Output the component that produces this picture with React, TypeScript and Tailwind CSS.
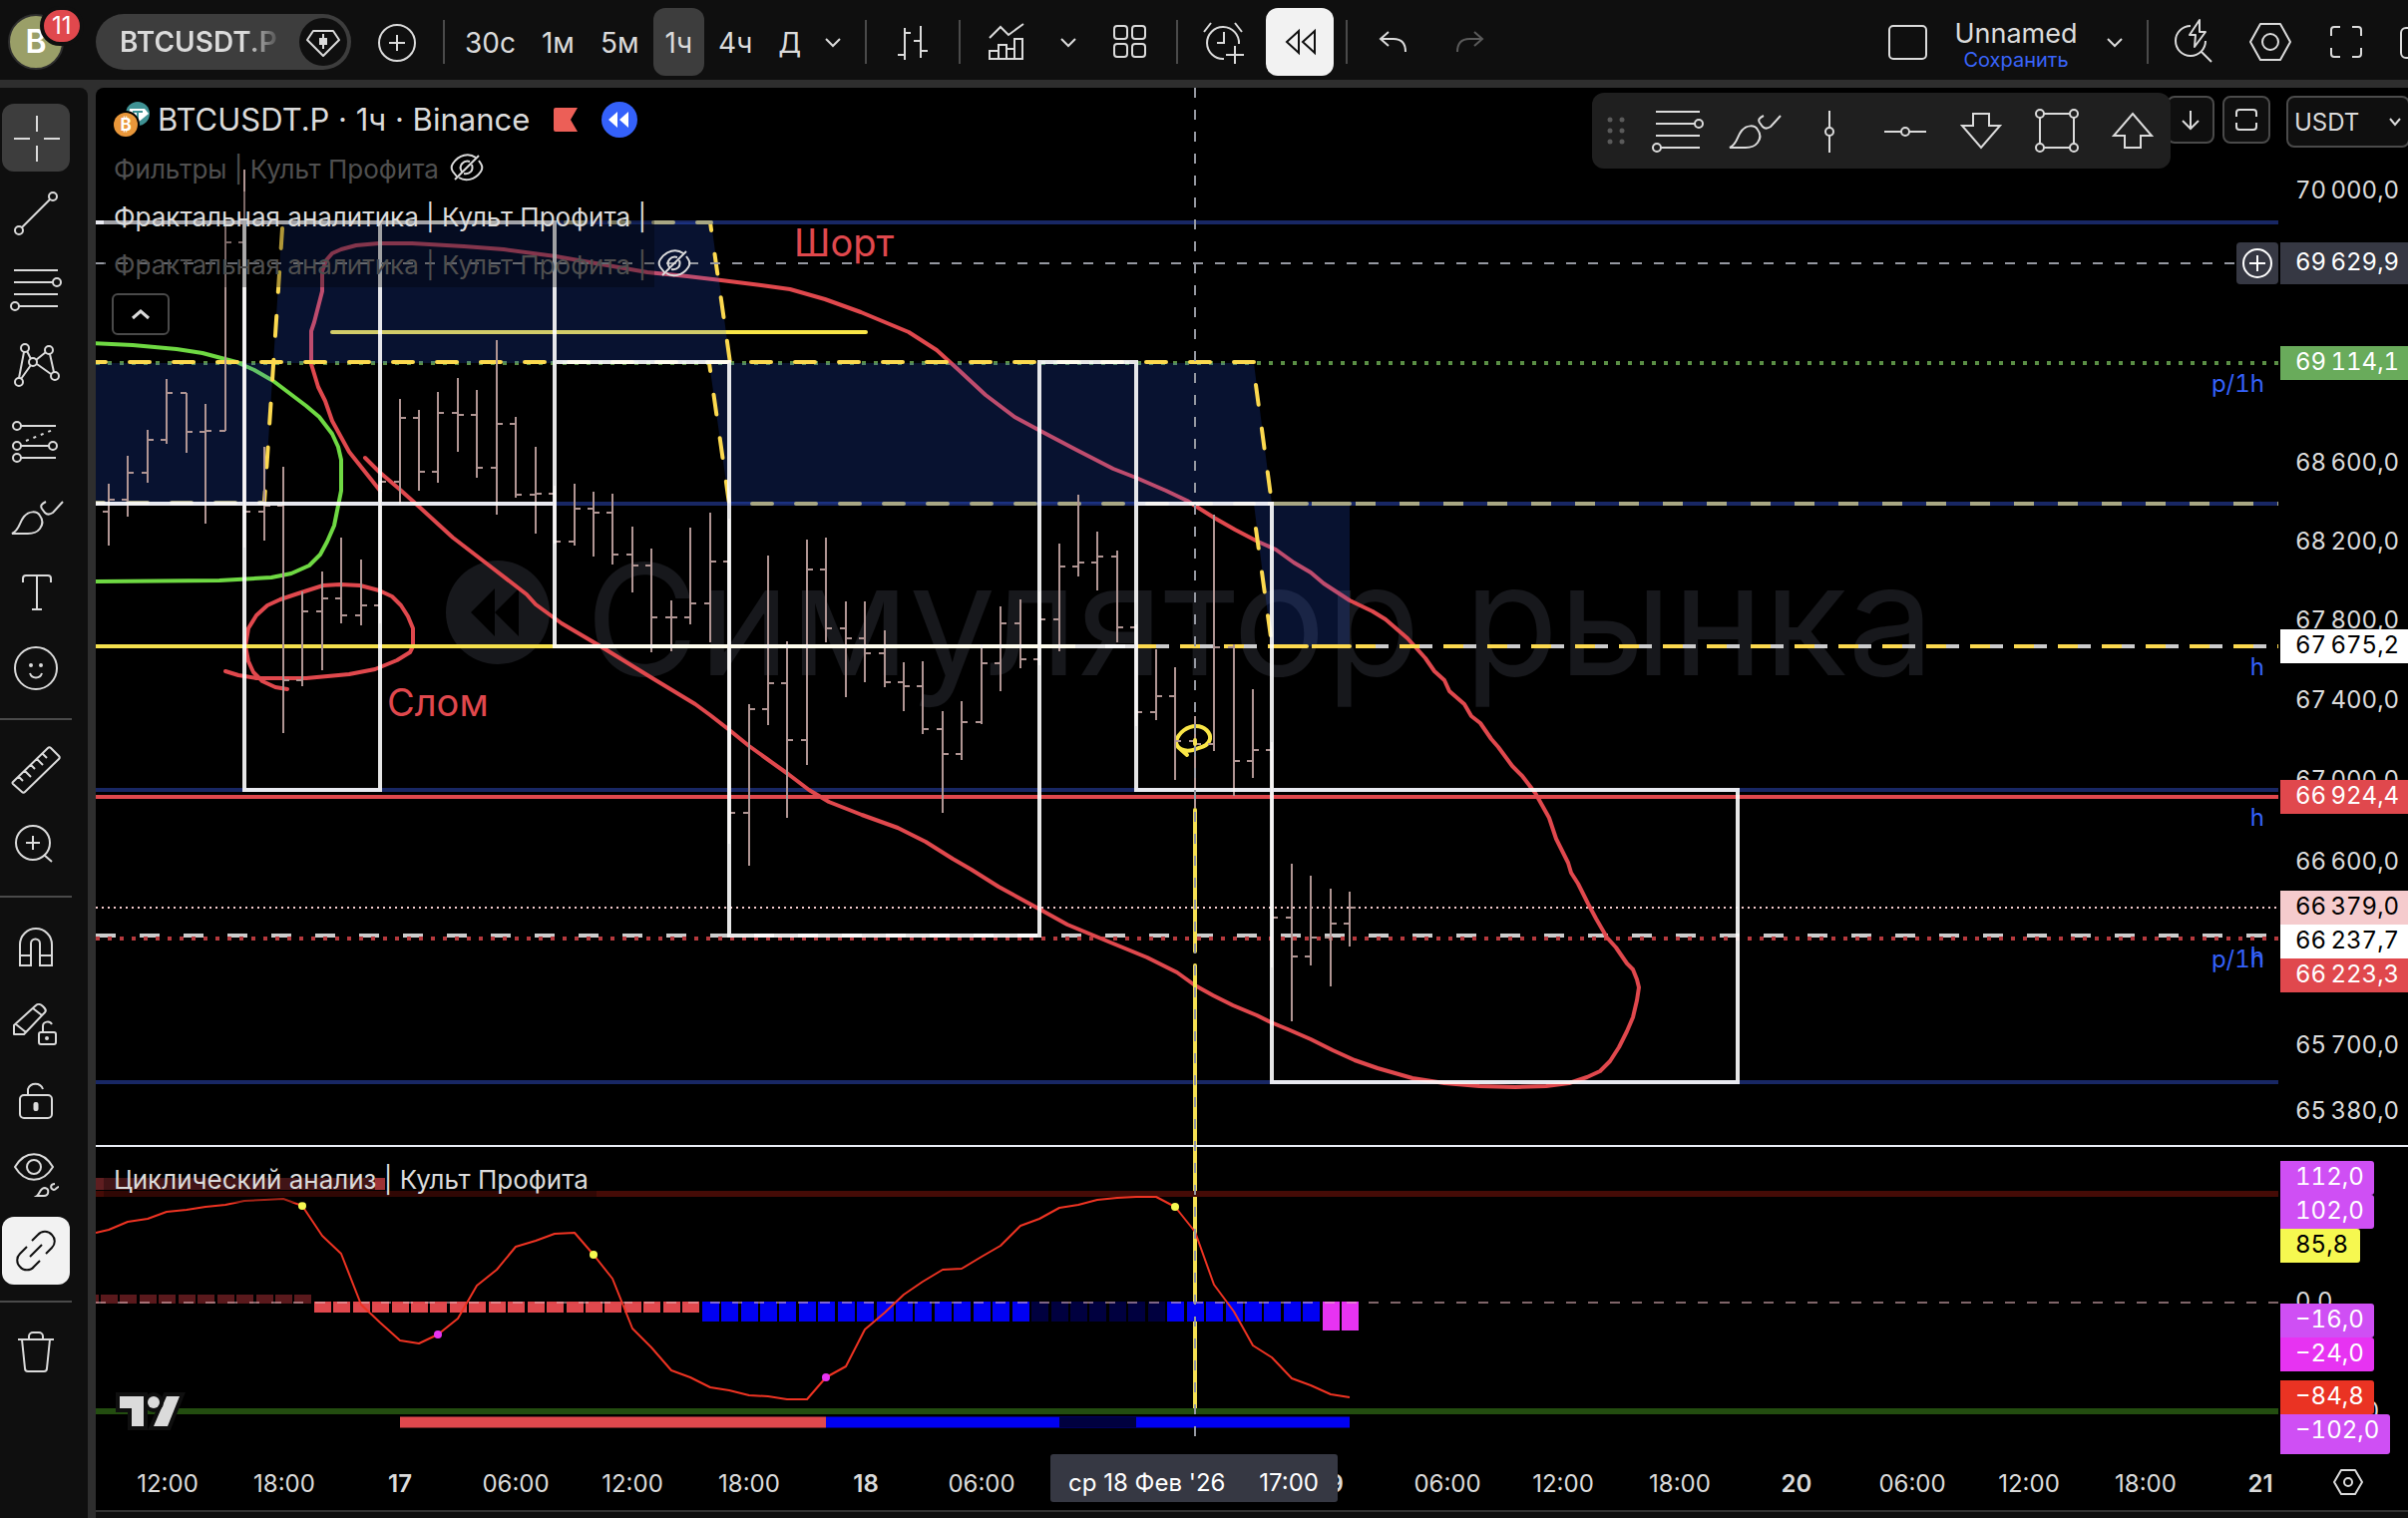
import { useState, type ReactNode } from "react";
import clsx from "clsx";

type Tone = "light" | "dark";

function Icon({ children, className }: { children: ReactNode; className?: string }) {
  return (
    <svg
      viewBox="0 0 56 56"
      className={clsx("size-14 shrink-0", className)}
      fill="none"
      stroke="currentColor"
      strokeWidth="2"
      aria-hidden="true"
    >
      {children}
    </svg>
  );
}

const fibIcon = (
  <>
    <path d="M6 9h44M6 21h39M6 33h44M11 45h39" />
    <circle cx="49" cy="21" r="4" />
    <circle cx="7" cy="45" r="4" />
  </>
);

const brushIcon = (
  <>
    <path d="M4 45C12 41 11 34 16 28c5-6 13-6 16-1 3 4 3 9 0 13-3 4-7 5-12 5z" />
    <path d="M38 13c-4 2-6 4-4 7l3 4c2 2 5 2 8 0l10-11" />
  </>
);

const lockIcon = (
  <>
    <rect x="12" y="24" width="32" height="23" rx="4" />
    <path d="M20 24v-6a8 8 0 0 1 15 0" />
    <rect x="26.500" y="32" width="3" height="7" rx="1" fill="currentColor" />
  </>
);

const chevronIcon = <path d="M21 25l7 7 7-7" />;

type Tool = { label: string; icon: ReactNode; active?: Tone };

const toolGroups: Tool[][] = [
  [
    {
      label: "Перекрестие",
      active: "dark",
      icon: <path d="M6 29h16M36 29h16M29 6v16M29 36v16" />,
    },
    {
      label: "Линия тренда",
      icon: (
        <>
          <path d="M14 42l28-28" />
          <circle cx="11" cy="45" r="4" />
          <circle cx="45" cy="11" r="4" />
        </>
      ),
    },
    { label: "Фибоначчи", icon: fibIcon },
    {
      label: "Паттерны",
      icon: (
        <>
          <path d="M16 15l-5 26M19 14l4 8M28 23l10-8M42 17l4 18M29 27l14 10M23 28L13 42" />
          <circle cx="17" cy="11" r="4" />
          <circle cx="41" cy="13" r="4" />
          <circle cx="25" cy="25" r="4" />
          <circle cx="11" cy="45" r="4" />
          <circle cx="47" cy="39" r="4" />
        </>
      ),
    },
    {
      label: "Прогнозирование",
      icon: (
        <>
          <path d="M13 13h35M13 33h28M13 45h35" />
          <path d="M18 28l27-11" strokeDasharray="3 5" />
          <circle cx="9" cy="13" r="4" />
          <circle cx="9" cy="33" r="4" />
          <circle cx="45" cy="33" r="4" />
          <circle cx="9" cy="45" r="4" />
        </>
      ),
    },
    { label: "Кисть", icon: brushIcon },
    { label: "Текст", icon: <path d="M15 18v-4a3 3 0 0 1 3-3h22a3 3 0 0 1 3 3v4M29 11v34M24 45h10" /> },
    {
      label: "Смайлы",
      icon: (
        <>
          <circle cx="28" cy="28" r="21" />
          <path d="M22 33c2 6 10 6 12 0" />
          <circle cx="23" cy="25" r="1" fill="currentColor" />
          <circle cx="33" cy="25" r="1" fill="currentColor" />
        </>
      ),
    },
  ],
  [
    {
      label: "Линейка",
      icon: (
        <path
          strokeLinejoin="round"
          d="M5 40L40 6c1-1 2-1 3 0l8 8c1 1 1 2 0 3L17 50c-1 1-2 1-3 0l-9-8c-1-1-1-1 0-2zM11 35l4 4M17 29l6 6M23 23l4 4M29 17l6 6M35 12l4 4"
        />
      ),
    },
    {
      label: "Увеличить",
      icon: (
        <>
          <circle cx="25" cy="25" r="17" />
          <path d="M18 25h14M25 18v14M36 37l8 7" />
        </>
      ),
    },
  ],
  [
    {
      label: "Магнит",
      icon: <path d="M12 46V25a16 16 0 0 1 32 0v21H32V24a4 4 0 0 0-9 0v22zM12 36h11M32 36h12" />,
    },
    {
      label: "Режим рисования",
      icon: (
        <>
          <path d="M6 39v-9L28 10c2-2 5-1 7 1s4 4 2 6L16 39zM8 29l10 8M25 13l9 7" strokeLinejoin="round" />
          <rect x="31" y="37" width="17" height="12" rx="2" />
          <path d="M35 37v-6c0-5 7-6 9-2" />
          <circle cx="39" cy="43" r="1" fill="currentColor" />
        </>
      ),
    },
    { label: "Заблокировать", icon: lockIcon },
    {
      label: "Скрыть объекты",
      icon: (
        <>
          <path d="M7 20c10-17 28-17 38 0-10 17-28 17-38 0z" />
          <circle cx="26" cy="20" r="7" />
          <path d="M29 49c3-2 3-8 8-8 5 1 4 8-1 8zM47 37c-5 0-5 5-1 6 2 0 3-3 5-3" />
        </>
      ),
    },
    {
      label: "Связать",
      active: "light",
      icon: (
        <path d="M24 18l6-6a9 9 0 0 1 14 0 9 9 0 0 1 0 13l-6 6M19 24l-7 7a9 9 0 0 0 0 13 9 9 0 0 0 14 0l6-6M22 34l12-12" />
      ),
    },
  ],
  [
    {
      label: "Удалить",
      icon: <path d="M10 15h36M21 15v-3a4 4 0 0 1 4-4h6a4 4 0 0 1 4 4v3M14 15l3 29a3 3 0 0 0 3 3h16a3 3 0 0 0 3-3l3-29" />,
    },
  ],
];

const favorites: Tool[] = [
  { label: "Фибоначчи", icon: fibIcon },
  { label: "Кисть", icon: brushIcon },
  {
    label: "Вертикальная линия",
    icon: (
      <>
        <path d="M28 8v17M28 33v17" />
        <circle cx="28" cy="29" r="4" />
      </>
    ),
  },
  {
    label: "Горизонтальная линия",
    icon: (
      <>
        <path d="M7 29h17M32 29h17" />
        <circle cx="28" cy="29" r="4" />
      </>
    ),
  },
  { label: "Стрелка вниз", icon: <path d="M20 11h16v12h11L28 45 9 23h11z" /> },
  {
    label: "Прямоугольник",
    icon: (
      <>
        <path d="M15 11h26M15 45h26M11 15v26M45 15v26" />
        <circle cx="11" cy="11" r="4" />
        <circle cx="45" cy="11" r="4" />
        <circle cx="11" cy="45" r="4" />
        <circle cx="45" cy="45" r="4" />
      </>
    ),
  },
  { label: "Стрелка вверх", icon: <path d="M28 11l19 22H36v12H20V33H9z" /> },
];

const intervals = ["30с", "1м", "5м", "1ч", "4ч", "Д"];

function BarButton({
  label,
  children,
  width = "w-[68px]",
  className,
}: {
  label: string;
  children: ReactNode;
  width?: string;
  className?: string;
}) {
  return (
    <button
      type="button"
      aria-label={label}
      className={clsx("flex h-[68px] shrink-0 items-center justify-center rounded-xl", width, className)}
    >
      <Icon>{children}</Icon>
    </button>
  );
}

function Divider() {
  return <div className="mx-3 h-11 w-[2px] shrink-0 bg-[#4a4a4a]" />;
}

function TopBar() {
  const [interval, setInterval] = useState("1ч");

  return (
    <header className="flex h-20 shrink-0 items-center overflow-hidden bg-[#0f0f0f] pt-1">
      <button type="button" className="relative ml-2 size-14 shrink-0">
        <span className="flex size-full items-center justify-center rounded-full border-2 border-[#2e2e2e] bg-[#9a9f68] text-[32px] font-semibold text-white">
          B
        </span>
        <span className="absolute -top-2 left-8 flex h-10 items-center rounded-full border-4 border-[#0f0f0f] bg-[#e0484d] px-2 text-2xl text-white">
          11
        </span>
      </button>

      <div className="ml-8 flex h-14 w-64 shrink-0 items-center justify-between rounded-full bg-[#3d3d3d] pr-1 pl-6">
        <button
          type="button"
          className="bg-linear-to-r from-[#dbdbdb] from-80% to-[#555555] bg-clip-text text-[28px] font-semibold text-transparent"
        >
          BTCUSDT.P
        </button>
        <svg viewBox="0 0 48 48" className="size-12 shrink-0" aria-hidden="true">
          <circle cx="24" cy="24" r="24" fill="#0f0f0f" />
          <path d="M14 13h20l6 9-16 16L8 22z" fill="none" stroke="#dbdbdb" strokeWidth="2" strokeLinejoin="round" />
          <path d="M24 16v15" stroke="#dbdbdb" strokeWidth="2" />
          <rect x="20" y="20" width="8" height="7" fill="#dbdbdb" />
        </svg>
      </div>
      <button type="button" aria-label="Сравнить" className="mx-5 flex w-[52px] shrink-0 justify-center">
        <Icon>
          <circle cx="28" cy="29" r="18" />
          <path d="M20 29h16M28 21v16" />
        </Icon>
      </button>
      <div className="h-11 w-[2px] shrink-0 bg-[#4a4a4a]" />

      <div className="ml-2 flex shrink-0 gap-[2px]">
        {intervals.map((item) => (
          <button
            key={item}
            type="button"
            onClick={() => setInterval(item)}
            className={clsx(
              "h-[68px] rounded-xl px-3 pt-[2px] text-[28px]",
              item === interval && "bg-[#3d3d3d]"
            )}
          >
            {item}
          </button>
        ))}
      </div>
      <BarButton label="Интервалы" width="w-12" className="-mx-1">
        {chevronIcon}
      </BarButton>
      <Divider />
      <BarButton label="Бары">
        <path d="M20 14v32M20 19h6M13 41h7M36 12v32M29 27h7M36 37h7" />
      </BarButton>
      <Divider />
      <BarButton label="Индикаторы">
        <path d="M11 24l11-11 8 8 15-11M11 45V37h9v8zM20 45V31h8v14zM28 45V35h8v10zM36 45V25h8v20z" />
      </BarButton>
      <BarButton label="Избранные индикаторы" width="w-14">
        {chevronIcon}
      </BarButton>
      <BarButton label="Шаблоны">
        <rect x="12" y="12" width="13" height="13" rx="3" />
        <rect x="30" y="12" width="13" height="13" rx="3" />
        <rect x="12" y="30" width="13" height="13" rx="3" />
        <rect x="30" y="30" width="13" height="13" rx="3" />
      </BarButton>
      <Divider />
      <BarButton label="Оповещение">
        <path d="M43 30a16 16 0 1 0-15 15M28 18v11h-7M8 18l7-9M39 9l7 9M39 32v18M30 41h18" />
      </BarButton>
      <BarButton label="Симулятор рынка" className="ml-2 bg-[#f2f2f2] text-[#0f0f0f]">
        <path d="M15 28l12-11v22zM31 28l12-11v22z" />
      </BarButton>
      <Divider />
      <BarButton label="Отменить">
        <path d="M23 18l-8 7 8 7M15 25h13c8 0 12 5 12 13" />
      </BarButton>
      <BarButton label="Повторить" className="ml-2 text-[#5a5a5a]">
        <path d="M33 18l8 7-8 7M41 25H28c-8 0-12 5-12 13" />
      </BarButton>

      <div className="-mr-12 ml-auto flex shrink-0 items-center">
        <BarButton label="Макет">
          <rect x="10" y="12" width="37" height="33" rx="4" />
        </BarButton>
        <button type="button" className="flex w-[150px] flex-col items-center pt-2">
          <span className="text-[27px] leading-7">Unnamed</span>
          <span className="text-xl leading-6 text-[#3964f9]">Сохранить</span>
        </button>
        <BarButton label="Управление макетами" width="w-12" className="-mr-1">
          {chevronIcon}
        </BarButton>
        <Divider />
        <div className="flex gap-2">
          <BarButton label="Быстрый поиск">
            <path d="M24 12a15 15 0 1 0 15 15M35 38l10 10" />
            <path d="M33 6L23 21h6l-1 12 11-15h-6z" strokeLinejoin="round" />
          </BarButton>
          <BarButton label="Настройки">
            <path d="M18 10h20l10 18-10 18H18L8 28z" strokeLinejoin="round" />
            <circle cx="28" cy="28" r="8" />
          </BarButton>
          <BarButton label="Полный экран">
            <path d="M13 22v-6a3 3 0 0 1 3-3h6M34 13h6a3 3 0 0 1 3 3v6M43 34v6a3 3 0 0 1-3 3h-6M22 43h-6a3 3 0 0 1-3-3v-6" />
          </BarButton>
          <BarButton label="Снимок">
            <rect x="7" y="14" width="42" height="30" rx="5" />
          </BarButton>
        </div>
      </div>
    </header>
  );
}

function ToolSidebar() {
  return (
    <aside className="w-[88px] shrink-0 rounded-tr-lg bg-[#0f0f0f] pt-4">
      {toolGroups.map((group, i) => (
        <div key={i}>
          {i > 0 && <div className="my-4 h-[2px] w-[72px] bg-[#4a4a4a]" />}
          <div className="ml-[2px] flex flex-col gap-2">
            {group.map((tool) => (
              <button
                key={tool.label}
                type="button"
                aria-label={tool.label}
                className={clsx(
                  "flex size-[68px] items-center justify-center rounded-xl",
                  tool.active === "dark" && "bg-[#3d3d3d]",
                  tool.active === "light" && "bg-[#f2f2f2] text-[#0f0f0f]"
                )}
              >
                <Icon>{tool.icon}</Icon>
              </button>
            ))}
          </div>
        </div>
      ))}
    </aside>
  );
}

// high, low, open, close in canvas units
const bars: [number, number, number, number][] = [
  [485, 547, 513, 501],
  [457, 518, 501, 474],
  [431, 484, 474, 441],
  [380, 445, 441, 394],
  [394, 454, 394, 433],
  [405, 525, 433, 432],
  [225, 432, 432, 243],
  [170, 549, 243, 513],
  [448, 542, 513, 507],
  [468, 735, 507, 682],
  [593, 688, 682, 613],
  [573, 672, 613, 600],
  [539, 625, 600, 617],
  [561, 627, 617, 607],
  [482, 625, 607, 483],
  [400, 505, 483, 419],
  [411, 492, 419, 473],
  [393, 484, 473, 414],
  [379, 453, 414, 416],
  [391, 479, 416, 469],
  [341, 516, 469, 425],
  [418, 499, 425, 496],
  [448, 535, 496, 495],
  [487, 545, 495, 543],
  [485, 547, 543, 510],
  [493, 558, 510, 514],
  [495, 566, 514, 556],
  [528, 594, 556, 567],
  [550, 654, 567, 619],
  [602, 653, 619, 619],
  [529, 626, 619, 605],
  [514, 644, 605, 563],
  [520, 846, 563, 815],
  [706, 868, 815, 711],
  [557, 727, 711, 685],
  [643, 820, 685, 742],
  [541, 767, 742, 571],
  [539, 644, 571, 630],
  [603, 699, 630, 640],
  [603, 684, 640, 655],
  [632, 689, 655, 684],
  [664, 713, 684, 688],
  [663, 736, 688, 731],
  [713, 815, 731, 756],
  [703, 762, 756, 724],
  [646, 726, 724, 665],
  [608, 693, 665, 625],
  [601, 670, 625, 661],
  [593, 667, 661, 621],
  [545, 653, 621, 568],
  [496, 578, 568, 564],
  [533, 592, 564, 558],
  [552, 644, 558, 629],
  [626, 728, 629, 714],
  [651, 722, 714, 698],
  [669, 782, 698, 743],
  [718, 810, 743, 746],
  [516, 753, 746, 649],
  [646, 798, 649, 763],
  [691, 780, 763, 752],
  [744, 970, 752, 920],
  [866, 1024, 920, 959],
  [878, 968, 959, 940],
  [891, 989, 940, 926],
  [894, 949, 926, 910],
];

const cycle = [
  1233, 1225, 1222, 1215, 1213, 1210, 1208, 1204, 1203, 1202, 1209, 1239, 1257, 1308, 1326, 1344, 1347, 1338, 1322,
  1289, 1273, 1250, 1244, 1237, 1236, 1258, 1282, 1332, 1351, 1374, 1381, 1391, 1394, 1399, 1400, 1403, 1403, 1381,
  1370, 1333, 1316, 1298, 1285, 1273, 1272, 1260, 1249, 1229, 1222, 1211, 1208, 1203, 1201, 1200, 1200, 1210, 1235,
  1288, 1315, 1349, 1361, 1382, 1389, 1398, 1401,
];

const barX = (i: number) => Math.round(109 + i * 19.44);

const cyclePoints = `96,1236 ${cycle.map((y, i) => `${barX(i)},${y}`).join(" ")}`;

const cycleDots = [
  { i: 10, color: "#f6f850" },
  { i: 17, color: "#e733f2" },
  { i: 25, color: "#f6f850" },
  { i: 37, color: "#e733f2" },
  { i: 55, color: "#f6f850" },
];

const histogram = Array.from({ length: 66 }, (_, n) => {
  const i = n - 1;
  if (i < 11) return { i, y: 1298, h: 9, color: "#5a191c" };
  if (i < 31) return { i, y: 1305, h: 11, color: "#e0484d" };
  if (i < 48) return { i, y: 1305, h: 20, color: "#0000f2" };
  if (i < 55) return { i, y: 1305, h: 20, color: "#00003f" };
  if (i < 63) return { i, y: 1305, h: 20, color: "#0000f2" };
  return { i, y: 1305, h: 29, color: "#e733f2" };
});

const redOutline =
  "381,492 350,453 333,422 326,402 319,388 312,365 312,332 315,323 323,292 323,272 327,261 333,254 342,250 357,246 380,244 413,244 465,247 505,250 557,257 603,265 649,273 689,277 723,281 763,286 792,290 827,300 863,313 887,323 911,333 939,351 960,370 988,396 1017,418 1043,432 1079,451 1116,470 1139,479 1169,492 1190,502 1217,519 1238,531 1261,543 1279,551 1297,564 1314,574 1327,585 1353,602 1376,613 1389,621 1411,640 1429,660 1438,673 1448,682 1453,693 1468,706 1475,718 1484,725 1495,741 1502,749 1516,768 1526,778 1539,795 1553,820 1560,841 1572,865 1575,875 1582,886 1592,906 1600,921 1611,940 1620,950 1631,966 1637,972 1641,982 1643,990 1641,1003 1637,1020 1631,1034 1623,1050 1614,1064 1604,1074 1591,1080 1573,1086 1550,1089 1519,1090 1483,1089 1448,1086 1416,1081 1381,1071 1358,1063 1336,1053 1314,1042 1291,1032 1274,1025 1260,1018 1236,1008 1216,998 1198,988 1180,975 1150,960 1111,944 1070,927 1043,912 1001,889 974,872 955,861 928,844 900,830 864,817 831,804 811,792 790,776 769,761 751,748 730,731 712,717 697,706 654,680 602,648 563,625 537,606 528,596 493,569 454,539 419,507 400,490 380,473 366,459";

const redLoop =
  "226,673 239,677 257,680 307,680 350,676 376,671 398,662 411,654 414,648 414,630 409,618 402,607 393,598 380,592 361,587 341,586 324,587 302,594 281,601 268,607 257,617 249,630 246,648 249,663 254,674 263,683 276,689 288,691";

const greenCurve =
  "92,344 133,346 177,350 203,354 237,363 255,371 274,382 307,407 320,418 333,435 339,448 342,461 342,492 339,507 335,527 328,543 321,556 310,567 292,575 272,579 220,582 92,583";

const priceTicks = [
  { text: "70\u2009000,0", y: 199 },
  { text: "68\u2009600,0", y: 472 },
  { text: "68\u2009200,0", y: 551 },
  { text: "67\u2009800,0", y: 630 },
  { text: "67\u2009400,0", y: 710 },
  { text: "67\u2009000,0", y: 790 },
  { text: "66\u2009600,0", y: 872 },
  { text: "66\u2009000,0", y: 991 },
  { text: "65\u2009700,0", y: 1056 },
  { text: "65\u2009380,0", y: 1122 },
  { text: "0,0", y: 1313 },
  { text: "−100,0", y: 1423 },
];

const priceTags = [
  { text: "69\u2009629,9", y: 243, h: 42, w: 130, bg: "#363843", fg: "#ffffff" },
  { text: "69\u2009114,1", y: 347, h: 34, w: 130, bg: "#69ab5b", fg: "#ffffff" },
  { text: "67\u2009675,2", y: 631, h: 34, w: 130, bg: "#ffffff", fg: "#000000" },
  { text: "66\u2009924,4", y: 782, h: 34, w: 130, bg: "#e0484d", fg: "#ffffff" },
  { text: "66\u2009379,0", y: 893, h: 34, w: 130, bg: "#f5cbcd", fg: "#000000" },
  { text: "66\u2009237,7", y: 927, h: 34, w: 130, bg: "#ffffff", fg: "#000000" },
  { text: "66\u2009223,3", y: 961, h: 34, w: 130, bg: "#e0484d", fg: "#ffffff" },
  { text: "112,0", y: 1164, h: 34, w: 94, bg: "#cf4ff4", fg: "#ffffff" },
  { text: "102,0", y: 1198, h: 34, w: 94, bg: "#cf4ff4", fg: "#ffffff" },
  { text: "85,8", y: 1232, h: 34, w: 80, bg: "#f6f850", fg: "#000000" },
  { text: "−16,0", y: 1307, h: 34, w: 94, bg: "#cf4ff4", fg: "#ffffff" },
  { text: "−24,0", y: 1341, h: 34, w: 94, bg: "#e733f2", fg: "#ffffff" },
  { text: "−84,8", y: 1384, h: 34, w: 94, bg: "#ea3323", fg: "#ffffff" },
  { text: "−102,0", y: 1418, h: 40, w: 110, bg: "#cf4ff4", fg: "#ffffff" },
];

const timeTicks = [
  { text: "12:00", x: 168 },
  { text: "18:00", x: 285 },
  { text: "17", x: 401 },
  { text: "06:00", x: 517 },
  { text: "12:00", x: 634 },
  { text: "18:00", x: 751 },
  { text: "18", x: 868 },
  { text: "06:00", x: 984 },
  { text: "19", x: 1334 },
  { text: "06:00", x: 1451 },
  { text: "12:00", x: 1567 },
  { text: "18:00", x: 1684 },
  { text: "20", x: 1801 },
  { text: "06:00", x: 1917 },
  { text: "12:00", x: 2034 },
  { text: "18:00", x: 2151 },
  { text: "21", x: 2266 },
];

function ChartCanvas() {
  return (
    <svg viewBox="96 88 2318 1426" className="block h-auto w-full" role="img" aria-label="График BTCUSDT.P">
      <defs>
        <clipPath id="pane">
          <rect x="96" y="88" width="2188" height="1370" />
        </clipPath>
      </defs>

      <g clipPath="url(#pane)" fill="none">
        <g fill="#17181c">
          <path
            fillRule="evenodd"
            d="M499 562a52 52 0 1 0 0 104 52 52 0 1 0 0-104zM472 614l24-24v48zM496 614l24-24v48z"
          />
          <text x="587" y="677" fontSize="155">
            Симулятор рынка
          </text>
        </g>

        <g stroke="#182764" strokeWidth="4">
          <path d="M96 223H2284M96 505H2284M96 792H2284M96 1085H2284" />
        </g>
        <path d="M96 799H2284" stroke="#e0484d" strokeWidth="4" />
        <path d="M96 364H2284" stroke="#5a8f45" strokeWidth="4" strokeDasharray="4 8" />
        <path d="M96 910H2284" stroke="#f5cbcd" strokeWidth="2" strokeDasharray="2 4" />
        <path d="M96 938H2284" stroke="#cccccc" strokeWidth="4" strokeDasharray="20 24" />
        <path d="M96 941H2284" stroke="#b5393d" strokeWidth="4" strokeDasharray="4 8" />

        <g strokeWidth="4" strokeLinejoin="round" strokeLinecap="round">
          <path d="M333 333H868" stroke="#f9e547" />
          <polyline points={redOutline} stroke="#e0484d" />
          <polyline points={redLoop} stroke="#e0484d" />
          <polyline points={greenCurve} stroke="#6fd943" />
          <path d="M1179 744c2-10 12-16 20-16 9 0 15 7 14 13-2 8-10 8-17 11-9 2-16-1-17-8zM1181 749l9 8" stroke="#f9e547" />
        </g>
        <text x="796" y="257" fontSize="38" fill="#e0484d">
          Шорт
        </text>
        <text x="388" y="718" fontSize="38" fill="#e0484d">
          Слом
        </text>

        <g fill="#2962ff" fillOpacity="0.19">
          <path d="M96 364H274L265 505H96zM283 223H713L732 364H274zM711 364H1257L1275 505H731zM1257 505H1353V648H1275z" />
        </g>

        <g stroke="#fcd94f" strokeWidth="4" strokeDasharray="20 24" strokeLinecap="round">
          <path d="M86 363H700M709 363H1257M283 229L265 504" />
          <path d="M712 223L732 364M711 364L731 505" strokeDashoffset="12" />
          <path d="M1259 386L1275 505M1259 530L1275 646" />
        </g>
        <g stroke="#a8a784" strokeWidth="4" strokeDasharray="20 24">
          <path d="M303 223H713M84 504H265M754 505H1257" strokeLinecap="round" />
          <path d="M1290 505H1353" strokeLinecap="round" />
          <path d="M1271 505H2284" />
        </g>

        <path d="M96 648H1078" stroke="#f4e04d" strokeWidth="4" />
        <path d="M1108 648H2284" stroke="#cccccc" strokeWidth="4" strokeDasharray="20 24" />
        <path d="M1139 648H2284" stroke="#fcd94f" strokeWidth="4" strokeDasharray="20 24" />
        <path d="M1290 648H1353" stroke="#fcd94f" strokeWidth="4" strokeDasharray="20 24" strokeLinecap="round" />

        <path
          stroke="#b09593"
          strokeWidth="2"
          d={bars
            .map(([high, low, open, close], i) => {
              const x = barX(i);
              return `M${x} ${high}V${low}M${x - 6} ${open}H${x}M${x} ${close}H${x + 6}`;
            })
            .join("")}
        />

        <path
          stroke="#ffffff"
          strokeOpacity="0.9"
          strokeWidth="4"
          d="M96 223H558M245 223V792H381V223M96 505H556M556 223V648H1139M556 363H731V938H1042V363H1139V792H1742V1085H1275V505H1139"
        />

        <path d="M1198 742V746M1198 812V954M1198 968V1415" stroke="#f4df52" strokeWidth="4" strokeLinecap="round" />
      </g>

      <path d="M96 1149H2414" stroke="#e8ecf4" strokeWidth="2" />

      <g clipPath="url(#pane)" fill="none">
        <path d="M96 1187H376" stroke="#5e1e20" strokeWidth="12" />
        <path d="M376 1187H386" stroke="#e0484d" strokeWidth="12" />
        <path d="M96 1197H2284" stroke="#450b06" strokeWidth="6" />
        <path d="M96 1415H2284" stroke="#234d10" strokeWidth="6" />
        <path d="M401 1426H828" stroke="#e0484d" strokeWidth="11" />
        <path d="M828 1426H1353" stroke="#0000f2" strokeWidth="11" />
        <path d="M1062 1426H1139" stroke="#00003f" strokeWidth="11" />
        {histogram.map((bar) => (
          <rect key={bar.i} x={barX(bar.i) - 8} y={bar.y} width="17" height={bar.h} fill={bar.color} />
        ))}
        <path d="M96 1306H2284" stroke="#e8b8c0" strokeOpacity="0.55" strokeWidth="2" strokeDasharray="10 12" />
        <polyline points={cyclePoints} stroke="#ee3322" strokeWidth="2" strokeLinejoin="round" />
        {cycleDots.map((dot) => (
          <circle key={dot.i} cx={barX(dot.i)} cy={cycle[dot.i]} r="4" fill={dot.color} />
        ))}
        <path d="M96 264H2284M1198 88V1446" stroke="#9598a1" strokeWidth="2" strokeDasharray="10 12" />
      </g>

      <g fill="#dbdbdb" stroke="#0f0f0f" strokeWidth="8" paintOrder="stroke">
        <path d="M120 1400h24v30h-12v-18h-12zM167 1400h13l-12 30h-14z" />
        <circle cx="154" cy="1406" r="6" />
      </g>

      <g fontSize="24" textAnchor="end" fill="#3461fa" className="tabular-nums">
        <text x="2270" y="393">p/1h</text>
        <text x="2270" y="677">h</text>
        <text x="2270" y="828">h</text>
        <text x="2270" y="970">p/1h</text>
        <text x="2270" y="967">h</text>
      </g>

      <g fontSize="24" fill="#dbdbdb" className="tabular-nums">
        {priceTicks.map((tick) => (
          <text key={tick.text} x="2301" y={tick.y}>
            {tick.text}
          </text>
        ))}
      </g>
      <g fontSize="24" className="tabular-nums">
        {priceTags.map((tag) => (
          <g key={tag.text}>
            <rect x="2286" y={tag.y} width={tag.w} height={tag.h} rx="3" fill={tag.bg} />
            <rect x="2286" y={tag.y} width="8" height={tag.h} fill={tag.bg} />
            <text x="2301" y={tag.y + (tag.h === 42 ? 28 : 24)} fill={tag.fg}>
              {tag.text}
            </text>
          </g>
        ))}
      </g>
      <rect x="2242" y="243" width="42" height="42" rx="4" fill="#363843" />
      <path d="M2263 256v16M2255 264h16" stroke="#ffffff" strokeWidth="2" />
      <circle cx="2263" cy="264" r="14" fill="none" stroke="#ffffff" strokeWidth="2" />

      <g fontSize="24" textAnchor="middle" fill="#dbdbdb">
        {timeTicks.map((tick) => (
          <text key={tick.x} x={tick.x} y="1496" fontWeight={tick.text.includes(":") ? 400 : 600}>
            {tick.text}
          </text>
        ))}
      </g>
      <rect x="1053" y="1458" width="288" height="48" rx="3" fill="#363843" />
      <g fontSize="24" fill="#ffffff">
        <text x="1071" y="1495">ср 18 Фев '26</text>
        <text x="1322" y="1495" textAnchor="end">
          17:00
        </text>
      </g>
    </svg>
  );
}

function HiddenIcon() {
  return (
    <svg viewBox="0 0 40 32" className="h-8 w-10 shrink-0" fill="none" stroke="#dbdbdb" strokeWidth="2" aria-hidden="true">
      <path d="M10 25l-4-5c-2-3-2-5 0-8 6-9 16-11 23-6M32 9l2 3c2 3 2 5 0 8-6 9-16 10-22 6" />
      <path d="M15 20c-4-6 2-12 8-10M25 13c2 6-2 10-8 9M8 28L32 4" />
    </svg>
  );
}

function Legend() {
  const [open, setOpen] = useState(true);

  return (
    <div className="absolute top-2 left-2 text-[26px]">
      <div className="flex h-12 items-center pl-2">
        <svg viewBox="0 0 40 40" className="mr-[6px] size-10 shrink-0" aria-hidden="true">
          <circle cx="26" cy="14" r="12" fill="#3f9294" />
          <path d="M18 9h15l4 5-11 9-9-9z" fill="#ffffff" />
          <path d="M21 12h10M26 12v8" stroke="#3f9294" strokeWidth="2" />
          <circle cx="14" cy="25" r="14" fill="#000000" />
          <circle cx="14" cy="25" r="12" fill="#e9973a" />
          <text x="14" y="31" textAnchor="middle" fontSize="17" fontWeight="700" fill="#ffffff">
            ₿
          </text>
        </svg>
        <h1 className="text-[31px]">BTCUSDT.P · 1ч · Binance</h1>
        <svg viewBox="0 0 24 24" className="ml-6 size-6 shrink-0" aria-hidden="true">
          <path d="M2 0h22l-7 12 7 12H2a2 2 0 0 1-2-2V2a2 2 0 0 1 2-2z" fill="#ec5f57" />
        </svg>
        <svg viewBox="0 0 36 36" className="ml-6 size-9 shrink-0" aria-hidden="true">
          <circle cx="18" cy="18" r="18" fill="#3461fa" />
          <path d="M7 18l9-8v16zM18 18l9-8v16z" fill="#ffffff" />
        </svg>
      </div>
      <div className="flex h-12 items-center">
        <span className="flex h-full items-center pt-[2px] pr-2 pl-[10px] text-[#4f4f4f]">Фильтры | Культ Профита</span>
        <HiddenIcon />
      </div>
      {open && (
        <>
          <div className="flex h-12 items-center">
            <span className="flex h-full items-center bg-black/30 pt-[2px] pr-2 pl-[10px]">
              Фрактальная аналитика | Культ Профита |
            </span>
          </div>
          <div className="flex h-12 items-center">
            <span className="flex h-full items-center bg-black/30 pt-[2px] pr-2 pl-[10px] text-[#4f4f4f]">
              Фрактальная аналитика | Культ Профита |
            </span>
            <HiddenIcon />
          </div>
        </>
      )}
      <button
        type="button"
        aria-label="Свернуть индикаторы"
        onClick={() => setOpen(!open)}
        className="mt-[6px] ml-2 flex h-[42px] w-[58px] items-center justify-center rounded-md border-2 border-[#4a4a4a] bg-black"
      >
        <svg viewBox="0 0 20 20" className="size-5" fill="none" stroke="currentColor" strokeWidth="3" aria-hidden="true">
          <path d="M2 14l8-7 8 7" />
        </svg>
      </button>
    </div>
  );
}

function FloatingControls() {
  return (
    <div className="absolute top-[5px] -right-[2px] flex items-start">
      <div className="z-10 -mr-1 flex h-[76px] items-center rounded-xl bg-[#1f1f1f]">
        <svg viewBox="0 0 52 56" className="h-14 w-[52px]" fill="#5a5a5a" aria-hidden="true">
          {[17, 28, 39].map((y) => (
            <g key={y}>
              <circle cx="18" cy={y} r="2.500" />
              <circle cx="30" cy={y} r="2.500" />
            </g>
          ))}
        </svg>
        <div className="flex gap-2 pr-1">
          {favorites.map((tool) => (
            <BarButton key={tool.label} label={tool.label}>
              {tool.icon}
            </BarButton>
          ))}
        </div>
      </div>
      <div className="mt-[3px] flex">
        <button
          type="button"
          aria-label="Сместить вниз"
          className="mr-2 flex size-12 items-center justify-center rounded-lg border-2 border-[#4a4a4a] bg-[#0f0f0f]"
        >
          <svg viewBox="0 0 24 24" className="size-6" fill="none" stroke="currentColor" strokeWidth="2" aria-hidden="true">
            <path d="M12 3v18M4 13l8 8 8-8" />
          </svg>
        </button>
        <button
          type="button"
          aria-label="Развернуть"
          className="mr-4 flex size-12 items-center justify-center rounded-lg border-2 border-[#4a4a4a] bg-[#0f0f0f]"
        >
          <svg viewBox="0 0 24 24" className="size-6" fill="none" stroke="currentColor" strokeWidth="2" aria-hidden="true">
            <path d="M2 9V5a3 3 0 0 1 3-3h14a3 3 0 0 1 3 3v4M2 15v4a3 3 0 0 0 3 3h14a3 3 0 0 0 3-3v-4" />
          </svg>
        </button>
        <div className="relative">
          <select
            aria-label="Валюта"
            className="h-[52px] w-[124px] appearance-none rounded-lg border-2 border-[#4a4a4a] bg-[#0f0f0f] pt-[2px] pl-[6px] text-2xl"
          >
            <option>USDT</option>
          </select>
          <svg
            viewBox="0 0 12 12"
            className="pointer-events-none absolute top-5 right-[9px] size-3"
            fill="none"
            stroke="currentColor"
            strokeWidth="2"
            aria-hidden="true"
          >
            <path d="M1 3l5 6 5-6" />
          </svg>
        </div>
      </div>
    </div>
  );
}

export default function App() {
  return (
    <div className="flex min-h-screen flex-col gap-2 bg-[#2e2e2e] font-[Inter,sans-serif] text-[#dbdbdb]">
      <TopBar />
      <div className="flex flex-1 gap-2">
        <ToolSidebar />
        <main className="flex min-w-0 flex-1 flex-col overflow-hidden rounded-tl-lg bg-black">
          <div className="relative">
            <ChartCanvas />
            <Legend />
            <FloatingControls />
            <p className="absolute top-3/4 left-2 flex h-12 items-center bg-black/30 pt-[2px] pr-2 pl-[10px] text-[26px]">
              Циклический анализ | Культ Профита
            </p>
            <button
              type="button"
              aria-label="Настройки шкалы"
              className="absolute right-8 bottom-0 flex size-14 items-center justify-center"
            >
              <Icon>
                <path d="M21 16h14l7 12-7 12H21l-7-12z" strokeLinejoin="round" />
                <circle cx="28" cy="28" r="4" />
              </Icon>
            </button>
          </div>
          <div className="min-h-2 flex-1 border-t-2 border-[#333333] bg-[#0f0f0f]" />
        </main>
      </div>
    </div>
  );
}
